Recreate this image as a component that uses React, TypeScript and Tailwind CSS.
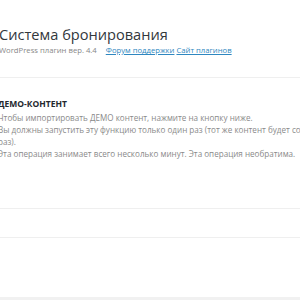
export default function App() {
  return (
    <div className="w-[300px] h-[300px] bg-white overflow-hidden flex flex-col" style={{ fontFamily: '"Open Sans", "Noto Sans", sans-serif' }}>
      <div className="pt-[24px] -ml-[1px]">
        <div className="text-[14.6px] leading-[20px] text-[#32373c] whitespace-nowrap">Система бронирования</div>
        <div className="mt-[1px] text-[7.7px] leading-[10px] text-[#888] whitespace-nowrap">
          WordPress плагин вер. 4.4<span className="ml-[9px] text-[#2e87c0] underline">Форум поддержки</span>{' '}
          <span className="text-[#2e87c0] underline">Сайт плагинов</span>
        </div>
      </div>
      <div className="mt-[22px] h-px bg-[#efefef]" />
      <div className="pt-[20px] -ml-[2px] text-[8.1px] leading-[12px] text-[#8a8a8a] whitespace-nowrap">
        <div className="font-bold text-[#23282d] text-[8.5px]">ДЕМО-КОНТЕНТ</div>
        <div className="mt-[2px]">Чтобы импортировать ДЕМО контент, нажмите на кнопку ниже.</div>
        <div>Вы должны запустить эту функцию только один раз (тот же контент будет создан снова).</div>
        <div>раз).</div>
        <div>Эта операция занимает всего несколько минут. Эта операция необратима.</div>
      </div>
      <div className="mt-[48px] h-px bg-[#efefef]" />
      <div className="mt-[28px] h-px bg-[#efefef]" />
      <div className="flex-1" />
      <div className="h-[3px] bg-[#f1f1f1]" />
    </div>
  );
}
